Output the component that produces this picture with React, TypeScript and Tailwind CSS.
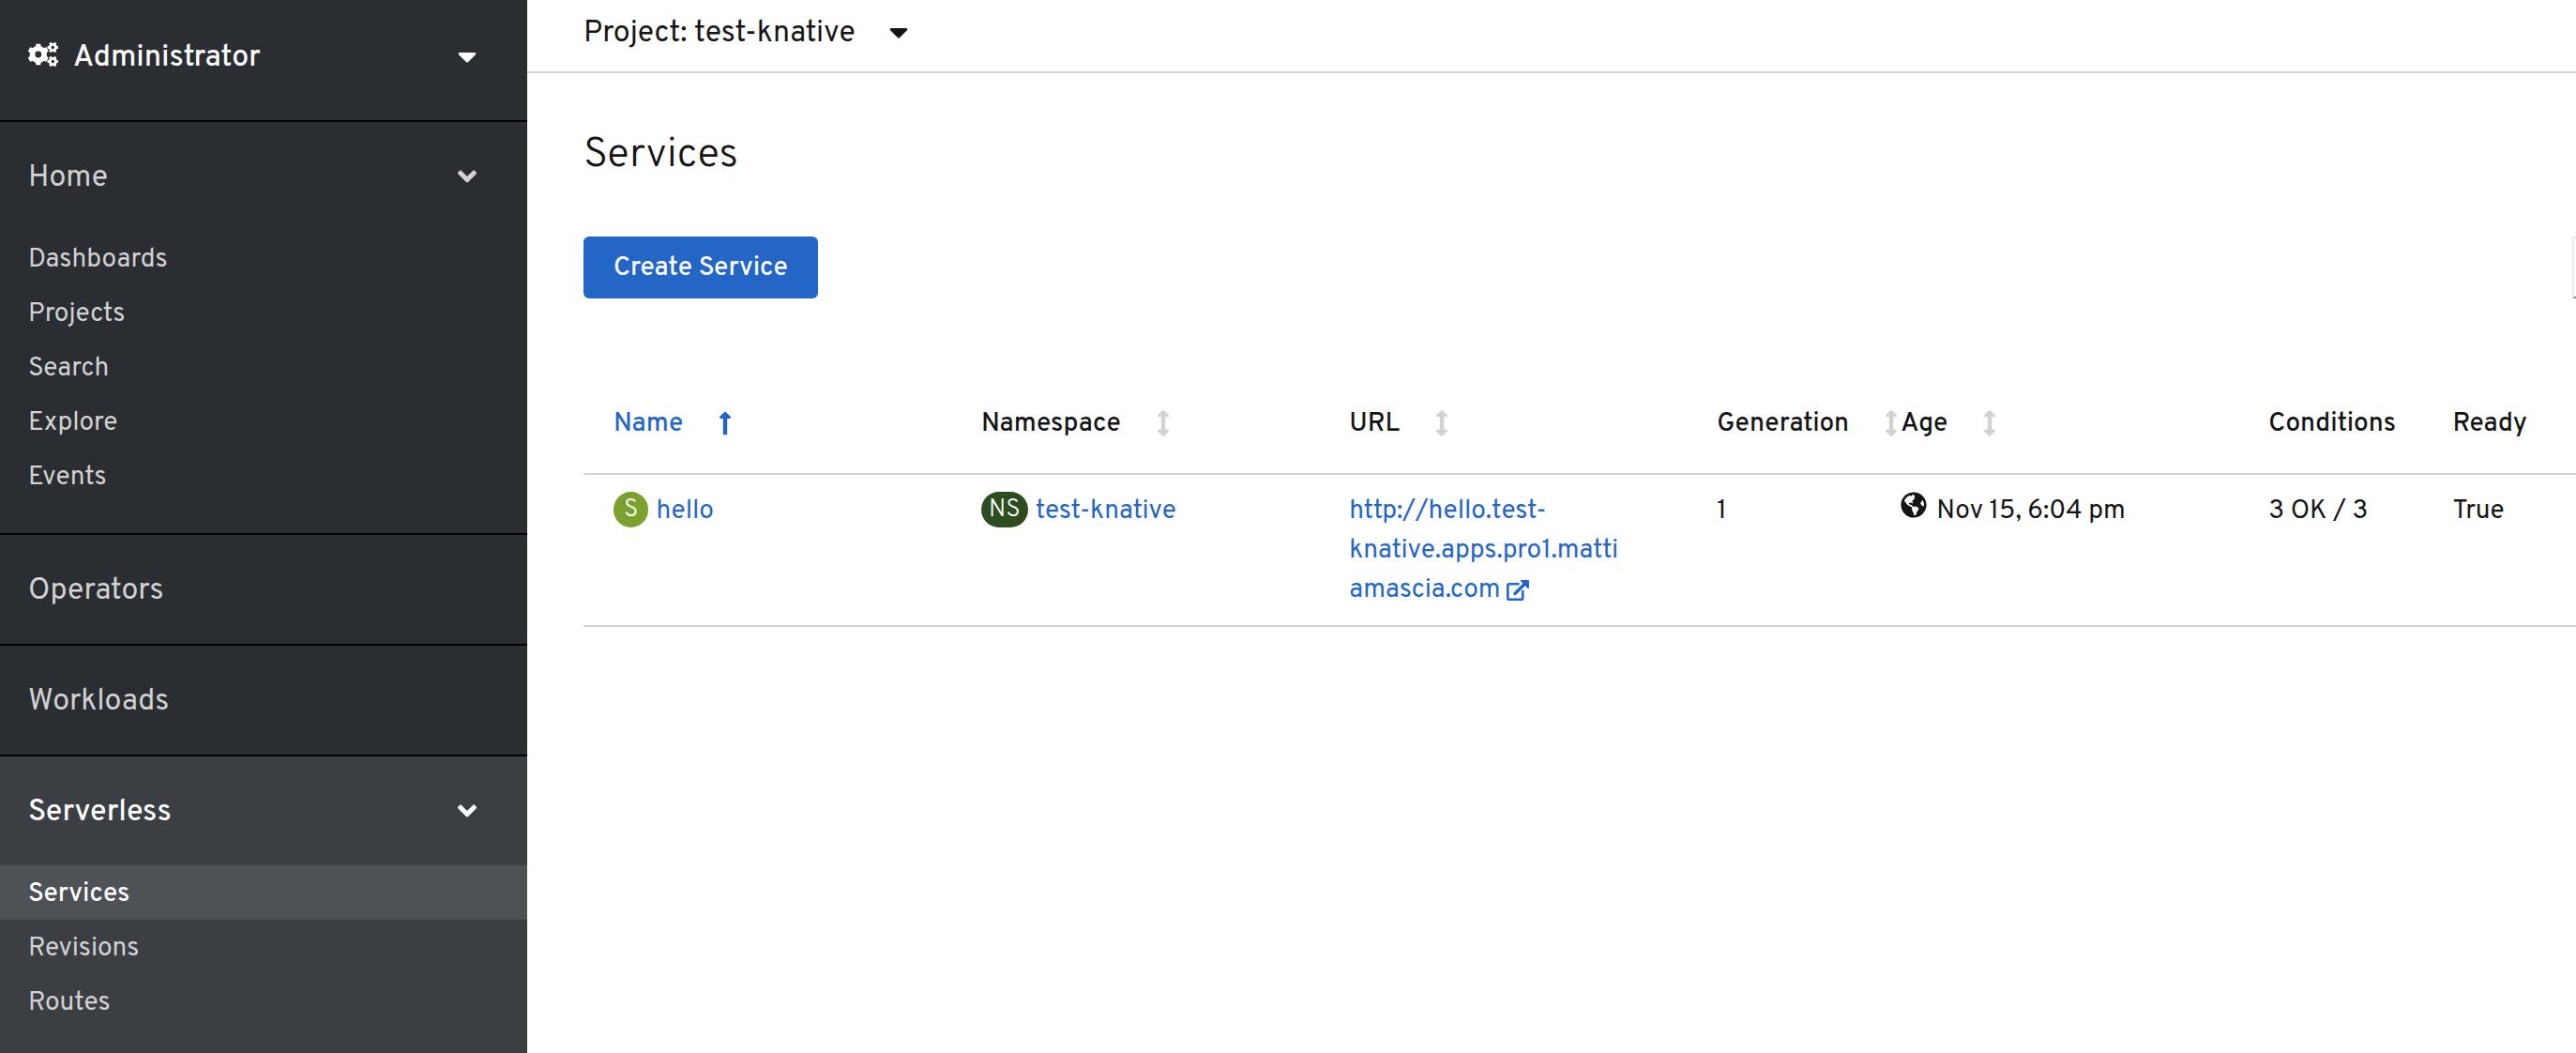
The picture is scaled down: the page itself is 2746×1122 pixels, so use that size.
import React from "react";
import { FaCaretDown, FaAngleDown, FaLongArrowAltUp, FaArrowsAltV, FaGlobeAmericas } from "react-icons/fa";

const TEETH = [0, 60, 120, 180, 240, 300];

type GearProps = { x: number; y: number; r: number; band: number; reach: number; tooth: number; turn: number };

function Gear({ x, y, r, band, reach, tooth, turn }: GearProps) {
  return (
    <g transform={`translate(${x} ${y}) rotate(${turn})`}>
      <circle r={r} fill="none" stroke="currentColor" strokeWidth={band} />
      {TEETH.map((a) => (
        <rect
          key={a}
          x={-tooth / 2}
          y={-reach}
          width={tooth}
          height={reach - r}
          rx={tooth / 5}
          fill="currentColor"
          transform={`rotate(${a})`}
        />
      ))}
    </g>
  );
}

function CogsIcon() {
  return (
    <svg viewBox="0 0 32 28" className="mb-1 h-7 w-8" aria-hidden="true">
      <Gear x={10.8} y={14} r={6.3} band={5.8} reach={11.3} tooth={5.4} turn={0} />
      <Gear x={26.3} y={6.5} r={3.1} band={2.8} reach={5.8} tooth={2.8} turn={30} />
      <Gear x={26.3} y={21.5} r={3.1} band={2.8} reach={5.8} tooth={2.8} turn={30} />
    </svg>
  );
}

function ExternalLinkIcon() {
  return (
    <svg viewBox="0 0 24 22" className="inline h-[22px] w-6" fill="none" stroke="currentColor" aria-hidden="true">
      <path
        d="M12.5 4.3H2.5a1.2 1.2 0 0 0-1.2 1.2V19.5a1.2 1.2 0 0 0 1.2 1.2H16a1.2 1.2 0 0 0 1.2-1.2V12"
        strokeWidth="2.6"
        strokeLinecap="round"
      />
      <path d="M9 14.5 19 4.5" strokeWidth="3.4" strokeLinecap="round" />
      <path d="M15.5.8H23.2V8.5Z" fill="currentColor" strokeWidth="1.4" strokeLinejoin="round" />
    </svg>
  );
}

function NavItem({ label, active = false }: { label: string; active?: boolean }) {
  return (
    <li>
      <a
        href="#"
        aria-current={active ? "page" : undefined}
        className={
          active
            ? "block h-[58px] bg-[#4e5156] pt-0.5 pl-[30px] leading-[58px] font-medium text-white"
            : "block h-[58px] pt-0.5 pl-[30px] leading-[58px] text-[#d2d2d2]"
        }
      >
        {label}
      </a>
    </li>
  );
}

function NavSection({ title, items = [], active }: { title: string; items?: string[]; active?: string }) {
  return (
    <section className={active ? "grow bg-[#3b3f43] text-white" : "border-b-2 border-black text-[#d2d2d2]"}>
      <button
        type="button"
        aria-expanded={items.length > 0}
        className={
          active
            ? "flex h-[116px] w-full items-center justify-between pr-12 pl-[30px] text-[32px] font-medium"
            : "flex h-[116px] w-full items-center justify-between pr-12 pl-[30px] text-[32px]"
        }
      >
        <span className="pt-1">{title}</span>
        {items.length > 0 && <FaAngleDown className="size-8" />}
      </button>
      {items.length > 0 && (
        <ul className="pb-8">
          {items.map((item) => (
            <NavItem key={item} label={item} active={item === active} />
          ))}
        </ul>
      )}
    </section>
  );
}

function Th({ label, sort }: { label: string; sort?: "asc" | "none" }) {
  return (
    <th className="h-[108px] border-b-2 border-[#d2d2d2] p-0 pl-8 text-left font-medium whitespace-nowrap" scope="col">
      {sort ? (
        <button
          type="button"
          className={sort === "asc" ? "flex items-center gap-[38px] text-[#2366c6]" : "flex items-center gap-[38px]"}
        >
          <span className="pt-0.5">{label}</span>
          {sort === "asc" ? (
            <FaLongArrowAltUp className="h-7 w-3.5" />
          ) : (
            <FaArrowsAltV className="h-7 w-3.5 text-[#d2d2d2]" />
          )}
        </button>
      ) : (
        <span className="block pt-0.5">{label}</span>
      )}
    </th>
  );
}

function Td({ children }: { children: React.ReactNode }) {
  return <td className="border-b-2 border-[#d2d2d2] pt-[18px] pb-4 pl-8">{children}</td>;
}

export default function App() {
  return (
    <div className="flex min-h-screen overflow-hidden bg-white font-['Overpass','Roboto',sans-serif] text-[28px] leading-[42px] text-[#151515]">
      <nav aria-label="Main" className="flex w-[562px] shrink-0 flex-col bg-[#2a2e33]">
        <button
          type="button"
          className="flex h-[130px] items-center border-b-2 border-black pr-12 pb-2 pl-[30px] text-[32px] font-medium text-white"
        >
          <CogsIcon />
          <span className="ml-4 pt-1">Administrator</span>
          <FaCaretDown className="ml-auto size-8" />
        </button>
        <NavSection title="Home" items={["Dashboards", "Projects", "Search", "Explore", "Events"]} />
        <NavSection title="Operators" />
        <NavSection title="Workloads" />
        <NavSection title="Serverless" items={["Services", "Revisions", "Routes"]} active="Services" />
      </nav>
      <main className="min-w-0 grow">
        <div className="flex h-[78px] items-center border-b-2 border-[#d2d2d2] pb-2 pl-[60px]">
          <button type="button" className="flex items-center gap-[30px] text-[32px]">
            <span className="pt-1">Project: test-knative</span>
            <FaCaretDown className="size-8" />
          </button>
        </div>
        <div className="pl-[60px]">
          <h1 className="pt-[58px] text-[44px] leading-[60px] font-light">Services</h1>
          <div className="mt-14 flex items-start justify-between">
            <button type="button" className="h-[66px] rounded-md bg-[#2366c6] px-8 pt-0.5 font-medium text-white">
              Create Service
            </button>
            <div className="w-1 overflow-hidden">
              <input
                type="text"
                aria-label="Filter by name"
                className="h-[66px] w-80 border-2 border-[#ededed] border-b-[#8a8d90]"
              />
            </div>
          </div>
          <table className="mt-20 w-full table-fixed border-separate border-spacing-0">
            <colgroup>
              <col className="w-[18.46%]" />
              <col className="w-[18.46%]" />
              <col className="w-[18.46%]" />
              <col className="w-[9.23%]" />
              <col className="w-[18.46%]" />
              <col className="w-[9.23%]" />
              <col />
            </colgroup>
            <thead>
              <tr>
                <Th label="Name" sort="asc" />
                <Th label="Namespace" sort="none" />
                <Th label="URL" sort="none" />
                <Th label="Generation" sort="none" />
                <Th label="Age" sort="none" />
                <Th label="Conditions" />
                <Th label="Ready" />
              </tr>
            </thead>
            <tbody>
              <tr className="align-top">
                <Td>
                  <span className="flex items-start gap-2">
                    <span className="h-[38px] rounded-full bg-[#7ba12e] px-[11px] text-[26px] leading-10 font-light text-white">
                      S
                    </span>
                    <a href="#" className="text-[#2366c6]">
                      hello
                    </a>
                  </span>
                </Td>
                <Td>
                  <span className="flex items-start gap-2">
                    <span className="h-[38px] rounded-full bg-[#2d4d20] px-2 text-[26px] leading-10 font-light text-white">
                      NS
                    </span>
                    <a href="#" className="text-[#2366c6]">
                      test-knative
                    </a>
                  </span>
                </Td>
                <Td>
                  <a href="#" className="text-[#2366c6]">
                    http://hello.test-
                    <br />
                    knative.apps.pro1.matti
                    <br />
                    amascia.com <ExternalLinkIcon />
                  </a>
                </Td>
                <Td>1</Td>
                <Td>
                  <span className="flex items-start gap-2.5">
                    <FaGlobeAmericas className="size-7" />
                    Nov 15, 6:04 pm
                  </span>
                </Td>
                <Td>3 OK / 3</Td>
                <Td>True</Td>
              </tr>
            </tbody>
          </table>
        </div>
      </main>
    </div>
  );
}
